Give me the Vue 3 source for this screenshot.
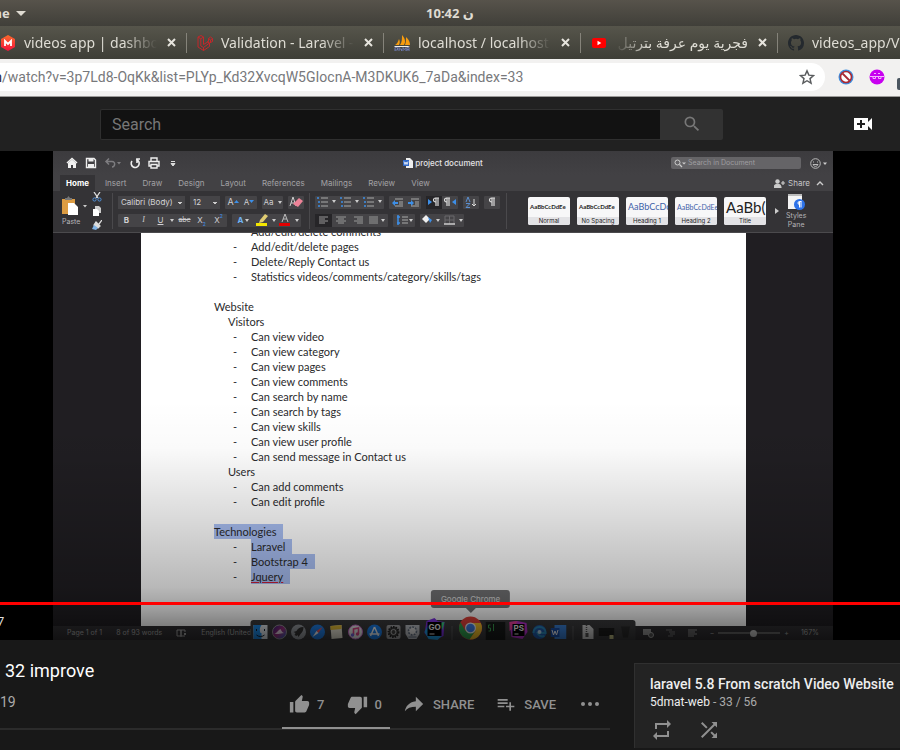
<script setup>
import { ref } from 'vue'

const url = ref('/watch?v=3p7Ld8-OqKk&list=PLYp_Kd32XvcqW5GIocnA-M3DKUK6_7aDa&index=33')
const query = ref('')
const docQuery = ref('')
const zoomLevel = ref(57)

const tabs = [
  { icon: 'm', text: 'videos app | dashboard' },
  { icon: 'laravel', text: 'Validation - Laravel - T' },
  { icon: 'pma', text: 'localhost / localhost /' },
  { icon: 'yt', text: 'فجرية يوم عرفة بترتيل', rtl: true },
  { icon: 'github', text: 'videos_app/Vi' }
]

const ribbonTabs = ['Home', 'Insert', 'Draw', 'Design', 'Layout', 'References', 'Mailings', 'Review', 'View']

const lines = [
  { level: 2, text: 'Add/edit/delete comments' },
  { level: 2, text: 'Add/edit/delete pages' },
  { level: 2, text: 'Delete/Reply Contact us' },
  { level: 2, text: 'Statistics videos/comments/category/skills/tags' },
  { level: 0, text: '' },
  { level: 0, text: 'Website' },
  { level: 1, text: 'Visitors' },
  { level: 2, text: 'Can view video' },
  { level: 2, text: 'Can view category' },
  { level: 2, text: 'Can view pages' },
  { level: 2, text: 'Can view comments' },
  { level: 2, text: 'Can search by name' },
  { level: 2, text: 'Can search by tags' },
  { level: 2, text: 'Can view skills' },
  { level: 2, text: 'Can view user profile' },
  { level: 2, text: 'Can send message in Contact us' },
  { level: 1, text: 'Users' },
  { level: 2, text: 'Can add comments' },
  { level: 2, text: 'Can edit profile' },
  { level: 0, text: '' },
  { level: 0, text: 'Technologies', selected: true },
  { level: 2, text: 'Laravel', selected: true },
  { level: 2, text: 'Bootstrap 4', selected: true },
  { level: 2, text: 'Jquery', selected: true, misspelt: true }
]

const styleCards = [
  { sample: 'AaBbCcDdEe', name: 'Normal', kind: 'body' },
  { sample: 'AaBbCcDdEe', name: 'No Spacing', kind: 'body' },
  { sample: 'AaBbCcDc', name: 'Heading 1', kind: 'h1' },
  { sample: 'AaBbCcDdEe', name: 'Heading 2', kind: 'h2' },
  { sample: 'AaBb(', name: 'Title', kind: 'title' }
]
</script>

<template>
  <div class="screen">
    <header class="system-bar">
      <button class="app-menu"><span class="cut">m</span>e
        <svg width="10" height="5" viewBox="0 0 10 5"><path d="M0 0h10L5 5z" fill="#dfdbd2" /></svg>
      </button>
      <time class="clock">10:42 ن</time>
    </header>

    <nav class="tab-strip">
      <div v-for="tab in tabs" :key="tab.icon" class="tab">
        <svg v-if="tab.icon === 'm'" class="favicon" viewBox="0 0 16 16">
          <defs><linearGradient id="mg" x1="0" y1="0" x2="0" y2="1"><stop offset="0" stop-color="#f96a2b" /><stop offset="1" stop-color="#f5123d" /></linearGradient></defs>
          <path d="M8 0l7 4v8l-7 4-7-4V4z" fill="url(#mg)" />
          <path d="M5 11V6l3 3 3-3v5" fill="none" stroke="#fff" stroke-width="1.800" />
        </svg>
        <svg v-else-if="tab.icon === 'laravel'" class="favicon" viewBox="0 0 16 16" fill="none" stroke="#c3272b" stroke-width="1">
          <path d="M1 2l3-1.500L6.500 2v7.500l5-3V3.500L13.500 2l2 1.500V6.500L12.500 8v3.500L6.500 15.500 1 12zM1 2l2.800 1.800L6.500 2M3.800 3.800V11l2.700 1.500 6-4.500-2.500-1.500M6.500 12.500v3M11.500 3.500l2 1.500 2-1.500M13.500 5v2.500" />
        </svg>
        <svg v-else-if="tab.icon === 'pma'" class="favicon" viewBox="0 0 16 16">
          <path d="M8 0c3 3 4 7 2 10H6C8 7 8 4 8 0zM12 2c3 3 4 5 4 8h-5C12 7 12 5 12 2zM5 4C4 7 3 9 1 10h4c1-2 1-4 0-6z" fill="#f89c0e" />
          <path d="M0 11h16l-2 1H1z" fill="#f5f0e6" />
          <path d="M1 16v-3.500h2.500V15H1M5 16v-4M5 14h2.500v2M9 16v-3.500l1.500 2 1.500-2V16M13 16v-3.500h2V16M13 14.500h2" fill="none" stroke="#6c78af" stroke-width="1" />
        </svg>
        <svg v-else-if="tab.icon === 'yt'" class="favicon" viewBox="0 0 16 16">
          <rect x="1" y="3" width="14" height="10" rx="2" fill="#f00" /><path d="M6.500 5.800v4.400L10.300 8z" fill="#fff" />
        </svg>
        <svg v-else class="favicon" viewBox="0 0 16 16">
          <path d="M8 0C3.580 0 0 3.580 0 8c0 3.540 2.290 6.530 5.470 7.590.4.070.55-.170.55-.380v-1.490c-2.010.37-2.530-.49-2.690-.94-.09-.23-.48-.94-.82-1.130-.28-.15-.68-.52-.01-.53.63-.01 1.080.58 1.230.82.72 1.210 1.870.87 2.330.66.07-.52.28-.87.51-1.070-1.780-.2-3.640-.89-3.640-3.950 0-.87.31-1.590.82-2.150-.08-.2-.36-1.020.08-2.120 0 0 .67-.21 2.200.82a7.600 7.600 0 014 0c1.530-1.040 2.200-.82 2.200-.82.44 1.100.16 1.920.08 2.120.51.56.82 1.270.82 2.150 0 3.070-1.870 3.750-3.650 3.950.29.25.54.73.54 1.480v2.200c0 .21.15.46.55.38A8 8 0 0016 8c0-4.420-3.580-8-8-8z" fill="#24292e" />
        </svg>
        <a href="#" class="tab-text" :class="{ rtl: tab.rtl }">{{ tab.text }}</a>
        <button class="tab-close" aria-label="Close tab">
          <svg width="9" height="9" viewBox="0 0 9 9"><path d="M1 1l7 7M8 1L1 8" stroke="#e6e4dd" stroke-width="2" /></svg>
        </button>
      </div>
    </nav>

    <div class="toolbar">
      <div class="address">
        <span class="cut host">m</span>
        <input v-model="url" class="url" type="text" aria-label="Address" spellcheck="false">
        <button aria-label="Bookmark">
          <svg width="16" height="16" viewBox="0 0 24 24"><path d="M12 2.800l2.800 6.400 7 .6-5.300 4.600 1.600 6.800L12 17.600l-6.100 3.600 1.600-6.800L2.200 9.800l7-.6z" fill="none" stroke="#5a5c5e" stroke-width="2.200" /></svg>
        </button>
      </div>
      <button aria-label="Blocker">
        <svg width="16" height="16" viewBox="0 0 16 16"><circle cx="8" cy="8" r="7.500" fill="#3d8fe0" /><circle cx="8" cy="8" r="5.500" fill="#fff" stroke="#a92a34" stroke-width="1.600" /><path d="M4.500 4.500l7 7" stroke="#a92a34" stroke-width="1.800" /></svg>
      </button>
      <button aria-label="Extension">
        <svg width="16" height="16" viewBox="0 0 16 16"><circle cx="8" cy="8" r="7.500" fill="#c800f0" /><path d="M1 7.500h14M4 7.500v2h2.500v-2M9.500 7.500v2H12v-2M5 4.500h2M9 4.500h2" fill="none" stroke="#f2b5ff" stroke-width="1" /></svg>
      </button>
      <span class="ext-badge"></span>
    </div>

    <div class="masthead">
      <form class="search" @submit.prevent>
        <input v-model="query" type="text" placeholder="Search" aria-label="Search">
        <button aria-label="Submit search">
          <svg width="20" height="20" viewBox="0 0 24 24"><path d="M15.500 14h-.79l-.28-.27A6.470 6.470 0 0016 9.500 6.500 6.500 0 109.500 16c1.610 0 3.090-.59 4.230-1.570l.27.28v.79l5 4.990L20.490 19l-4.990-5zm-6 0C7.010 14 5 11.990 5 9.500S7.010 5 9.500 5 14 7.010 14 9.500 11.990 14 9.500 14z" fill="#777" /></svg>
        </button>
      </form>
      <button aria-label="Create video">
        <svg width="18" height="12" viewBox="0 0 18 12"><path d="M0 0h14v4l4-4v12l-4-4v4H0z" fill="#fff" /><path d="M7 2v8M3 6h8" stroke="#212121" stroke-width="2" /></svg>
      </button>
    </div>

    <section class="player">
      <div class="word">
        <div class="word-title">
          <div class="quick">
            <svg width="12" height="12" viewBox="0 0 12 12"><path d="M1 6l5-4.500L11 6" fill="none" stroke="#f0f0f0" stroke-width="1.600" /><path d="M2 6l4-3.500L10 6v5H7V8H5v3H2z" fill="#f0f0f0" /></svg>
            <svg width="12" height="12" viewBox="0 0 12 12"><path d="M1.500 1.500h7.500l1.500 1.500v7.500h-9z" fill="none" stroke="#eee" stroke-width="1.400" /><path d="M3.500 1.500h5v3h-5zM3 7h6v3.500H3z" fill="#eee" /></svg>
            <svg width="18" height="12" viewBox="0 0 18 12"><path d="M5 1.500L2 4.500l3 3M2.500 4.500H8c4 0 3 5.500 0 5.500" fill="none" stroke="#7e7d80" stroke-width="1.500" /><path d="M13 5h4l-2 2.500z" fill="#7e7d80" /></svg>
            <svg width="12" height="12" viewBox="0 0 12 12"><path d="M7 2.500A4 4 0 113 4M8 6V2h3" fill="none" stroke="#eee" stroke-width="1.600" /></svg>
            <svg width="12" height="12" viewBox="0 0 12 12"><path d="M3 4V1h6v3M3 9H1V4.500h10V9H9M3 7.500h6V11H3z" fill="none" stroke="#eee" stroke-width="1.400" /></svg>
            <svg width="12" height="12" viewBox="0 0 12 12"><path d="M4 4.500h4M4 6.500h4L6 9z" fill="#ddd" stroke="#ddd" /></svg>
          </div>
          <div class="doc-name">
            <svg width="10" height="10" viewBox="0 0 10 10"><path d="M3 0h4l3 3v7H3z" fill="#eee" /><path d="M0 2h6v6H0z" fill="#2f68c8" /><path d="M1 3.500l1 3 1-2.500 1 2.500 1-3" fill="none" stroke="#fff" stroke-width=".8" /></svg>
            <span>project document</span>
          </div>
          <div class="title-right">
            <label class="doc-search">
              <svg width="12" height="9" viewBox="0 0 12 9"><circle cx="3.500" cy="3.500" r="2.500" fill="none" stroke="#ccc" /><path d="M5.500 5.500L8 8" stroke="#ccc" stroke-width="1.300" /><path d="M8 3.500h4l-2 2z" fill="#ccc" /></svg>
              <input v-model="docQuery" type="text" placeholder="Search in Document" aria-label="Search in Document">
            </label>
            <svg width="17" height="11" viewBox="0 0 17 11"><circle cx="5.500" cy="5.500" r="4.800" fill="none" stroke="#bbb" /><path d="M3 6.500c1 2.500 4 2.500 5 0zM3.500 3.500v1M7.500 3.500v1" fill="none" stroke="#bbb" /><path d="M13 4.500h4l-2 2.500z" fill="#ccc" /></svg>
          </div>
        </div>

        <div class="word-tabs">
          <button v-for="name in ribbonTabs" :key="name" :class="{ active: name === 'Home' }">{{ name }}</button>
          <button class="share-doc">
            <svg width="11" height="9" viewBox="0 0 11 9"><circle cx="3.500" cy="2.500" r="2.200" fill="#ccc" /><path d="M0 9c0-5 7-5 7 0zM7 4h4M9 2v4" fill="#ccc" stroke="#ccc" stroke-width="1.200" /></svg>
            Share
            <svg class="fold" width="8" height="6" viewBox="0 0 8 6"><path d="M1 5l3-3 3 3" fill="none" stroke="#ccc" stroke-width="1.400" /></svg>
          </button>
        </div>

        <div class="ribbon">
          <button class="paste">
            <svg width="26" height="20" viewBox="0 0 26 20"><path d="M1 3h13v15H1z" fill="#dc9c43" /><path d="M4 4V2h2l1.500-2L9 2h2v2z" fill="#777" /><path d="M7 7h6l4 4v8H7z" fill="#fff" /><path d="M22 9h4l-2 2.500z" fill="#ccc" /></svg>
            <span>Paste</span>
          </button>
          <div class="clip-tools">
            <button aria-label="Cut"><svg width="10" height="10" viewBox="0 0 10 10"><path d="M2 0l4 6M8 0L4 6" stroke="#ddd" stroke-width="1.300" /><circle cx="2.500" cy="7.500" r="1.600" fill="none" stroke="#4f8fd8" /><circle cx="7.500" cy="7.500" r="1.600" fill="none" stroke="#4f8fd8" /></svg></button>
            <button aria-label="Copy"><svg width="10" height="10" viewBox="0 0 10 10"><path d="M3 0h4l2 2v5H3z" fill="#ccc" /><path d="M1 3h4l2 2v5H1z" fill="#fff" /></svg></button>
            <button aria-label="Format painter"><svg width="10" height="10" viewBox="0 0 10 10"><path d="M10 0L7 4M4 2l4 4-2 2-4-3z" stroke="#ddd" fill="#ddd" stroke-width="1.300" /><path d="M2 5l4 3-2 2-4-1z" fill="#7fb2e5" /></svg></button>
          </div>

          <div class="block font-block">
            <div class="row">
              <select class="font-name" aria-label="Font"><option>Calibri (Body)</option></select>
              <select class="font-size" aria-label="Font size"><option>12</option></select>
              <div class="group">
                <button class="wide grow">A<svg width="5" height="4" viewBox="0 0 5 4"><path d="M0 3l2.500-3L5 3z" fill="#3d8fe8" /></svg></button>
                <button class="wide">A<svg width="5" height="4" viewBox="0 0 5 4"><path d="M0 0h5L2.500 3z" fill="#3d8fe8" /></svg></button>
              </div>
              <div class="group"><button class="case">Aa<svg width="8" height="5" viewBox="0 0 8 5"><path d="M4 1h4L6 4z" fill="#ccc" /></svg></button></div>
              <div class="group"><button aria-label="Clear formatting" class="wide"><svg width="14" height="12" viewBox="0 0 14 12"><path d="M1 10L4 1l3 9M2 7h4" fill="none" stroke="#ccc" /><path d="M10 2l4 3-5 6-5-3z" fill="#ee8398" /></svg></button></div>
            </div>
            <div class="row">
              <div class="group">
                <button class="cell b">B</button><button class="cell i">I</button><button class="cell u">U</button>
                <svg width="7" height="5" viewBox="0 0 7 5"><path d="M1 1h4L3 4z" fill="#ccc" /></svg>
                <button class="cell s">abc</button><button class="cell">X<sub>2</sub></button><button class="cell">X<sup>2</sup></button>
              </div>
              <div class="group">
                <button class="mark fx">A<svg width="6" height="5" viewBox="0 0 6 5"><path d="M2 1h4L4 4z" fill="#ccc" /></svg></button>
                <button class="mark" aria-label="Highlight"><svg width="21" height="12" viewBox="0 0 21 12"><path d="M9 0l3 2-5 6-4 1 1-3z" fill="#e0cc72" /><path d="M0 9h11v3H0z" fill="#f3e600" /><path d="M16 5h4l-2 3z" fill="#ccc" /></svg></button>
                <button class="mark" aria-label="Font colour"><svg width="21" height="12" viewBox="0 0 21 12"><path d="M3 8L6 0l3 8M4 5h4" fill="none" stroke="#bbb" /><path d="M0 9h11v3H0z" fill="#e30000" /><path d="M16 5h4l-2 3z" fill="#ccc" /></svg></button>
              </div>
            </div>
          </div>

          <div class="block para-block">
            <div class="row">
              <div class="group">
                <button v-for="n in 3" :key="n" class="list-button" aria-label="List">
                  <svg width="20" height="10" viewBox="0 0 20 10"><path d="M0 1h2M1 5h2M1 9h2" stroke="#3d8fe8" stroke-width="1.600" /><path d="M4 1h7M4 5h7M4 9h7" stroke="#aaa" /><path d="M15 3h4l-2 3z" fill="#ccc" /></svg>
                </button>
              </div>
              <div class="group">
                <button class="wide" aria-label="Decrease indent"><svg width="11" height="9" viewBox="0 0 11 9"><path d="M0 5l3-3v2h3v2H3v2z" fill="#3d8fe8" /><path d="M3 1h8M7 4h4M7 6h4M3 8h8" stroke="#aaa" /></svg></button>
                <button class="wide" aria-label="Increase indent"><svg width="11" height="9" viewBox="0 0 11 9"><path d="M6 5L3 2v2H0v2h3v2z" fill="#3d8fe8" /><path d="M3 1h8M7 4h4M7 6h4M3 8h8" stroke="#aaa" /></svg></button>
              </div>
              <div class="group">
                <button class="wide pressed" aria-label="Left to right"><svg width="12" height="10" viewBox="0 0 12 10"><path d="M0 2l4 3-4 3z" fill="#3d8fe8" /><path d="M11 1H7.500a2 2 0 000 4M8 1v8M10 1v8" fill="none" stroke="#ddd" stroke-width="1.200" /></svg></button>
                <button class="wide" aria-label="Right to left"><svg width="12" height="10" viewBox="0 0 12 10"><path d="M12 2L8 5l4 3z" fill="#3d8fe8" /><path d="M6 1H2.500a2 2 0 000 4M3 1v8M5 1v8" fill="none" stroke="#ddd" stroke-width="1.200" /></svg></button>
              </div>
              <div class="group"><button class="wide" aria-label="Sort"><svg width="12" height="11" viewBox="0 0 12 11"><path d="M1 5l2-5 2 5M1 6.500h4L1 10.500h4" fill="none" stroke="#5b8fd0" /><path d="M9 2v7M7 7l2 2 2-2" fill="none" stroke="#ddd" /></svg></button></div>
              <div class="group"><button class="wide" aria-label="Show marks"><svg width="8" height="10" viewBox="0 0 8 10"><path d="M7 1H3.500a2 2 0 000 4M4 1v8M6 1v8" fill="none" stroke="#ddd" stroke-width="1.200" /></svg></button></div>
            </div>
            <div class="row">
              <div class="group">
                <button class="cell pressed" aria-label="Align left"><svg width="10" height="8" viewBox="0 0 10 8"><path d="M0 1h9M0 3h6M0 5h9M0 7h6" stroke="#999" /></svg></button>
                <button class="cell" aria-label="Align centre"><svg width="10" height="8" viewBox="0 0 10 8"><path d="M0 1h10M2 3h6M0 5h10M2 7h6" stroke="#999" /></svg></button>
                <button class="cell" aria-label="Align right"><svg width="10" height="8" viewBox="0 0 10 8"><path d="M1 1h9M4 3h6M1 5h9M4 7h6" stroke="#999" /></svg></button>
                <button class="mark" aria-label="Justify"><svg width="18" height="8" viewBox="0 0 18 8"><path d="M1 1h9M1 3h9M1 5h9M1 7h9" stroke="#999" /><path d="M13 3h4l-2 3z" fill="#ccc" /></svg></button>
              </div>
              <div class="group"><button class="mark" aria-label="Line spacing"><svg width="17" height="10" viewBox="0 0 17 10"><path d="M2 0v10M1 2h3M1 8h3" stroke="#3d8fe8" stroke-width="1.500" /><path d="M6 2h6M6 5h6M6 8h6" stroke="#aaa" /><path d="M13 4h4l-2 3z" fill="#ccc" /></svg></button></div>
              <div class="group">
                <button class="mark" aria-label="Shading"><svg width="19" height="10" viewBox="0 0 19 10"><path d="M4 0l4 4-4 4-4-4z" fill="#eee" /><path d="M6 2l4 3-2 3z" fill="#3d8fe8" /><path d="M14 4h4l-2 3z" fill="#ccc" /></svg></button>
                <button class="mark" aria-label="Borders"><svg width="19" height="10" viewBox="0 0 19 10"><path d="M1 1h9v8M1 1v8M5.500 1v8M1 5h9" fill="none" stroke="#6a696c" /><path d="M0 9h11" stroke="#ccc" stroke-width="1.500" /><path d="M15 4h4l-2 3z" fill="#ccc" /></svg></button>
              </div>
            </div>
          </div>

          <div class="gallery">
            <button v-for="card in styleCards" :key="card.name" class="card" :class="card.kind">
              <span class="sample">{{ card.sample }}</span>
              <span class="card-name">{{ card.name }}</span>
            </button>
            <svg width="4" height="6" viewBox="0 0 4 6"><path d="M0 0l4 3-4 3z" fill="#ccc" /></svg>
            <button class="pane">
              <svg width="18" height="18" viewBox="0 0 18 18"><path d="M1 1h14v15H1z" fill="#f4f4f4" /><path d="M1 1h14v2H1z" fill="#bbb" /><circle cx="12.500" cy="11.500" r="5.500" fill="#2d72e8" /><path d="M14.500 8.500h-2a1.500 1.500 0 000 3M12.500 8.500v6M14 8.500v6" fill="none" stroke="#fff" /></svg>
              <span>Styles</span>
              <span>Pane</span>
            </button>
          </div>
        </div>

        <div class="desk">
          <article class="page">
            <p v-for="(line, i) in lines" :key="i" class="line" :class="'level-' + line.level">
              <span v-if="line.level === 2" class="dash">-</span>
              <span :class="{ selected: line.selected }"><span :class="{ misspelt: line.misspelt }">{{ line.text }}</span></span>
            </p>
          </article>
        </div>

        <footer class="status">
          <span>Page 1 of 1</span>
          <span>8 of 93 words</span>
          <svg width="11" height="8" viewBox="0 0 11 8"><path d="M5 1v7M1 1h4v6H1zM5 1h4v2M9 7H5M8 4l2 2M10 4L8 6" fill="none" stroke="#aaa" /></svg>
          <span>English (United</span>
          <div class="status-right">
            <svg width="11" height="10" viewBox="0 0 11 10"><path d="M0 1h8v6H0z" fill="#999" /><circle cx="8" cy="7" r="2.500" fill="#555" stroke="#aaa" /></svg>
            <svg width="10" height="8" viewBox="0 0 10 8"><path d="M0 1h6M3 3h6M4 5h5M2 7h5" stroke="#777" /></svg>
            <svg width="10" height="8" viewBox="0 0 10 8"><path d="M0 1h9M0 3h7M0 5h9M0 7h6" stroke="#999" /></svg>
            <div class="zoom-control">
              <span>−</span>
              <input v-model="zoomLevel" type="range" min="0" max="100" aria-label="Zoom">
              <span>+</span>
            </div>
            <span>167%</span>
          </div>
        </footer>

        <div class="dock">
          <svg width="16" height="16" viewBox="0 0 16 16"><rect x="1" y="1" width="14" height="14" fill="#e8eef4" /><path d="M1 1h8c-2 3-2 6-1 8h1v6H1z" fill="#1e90f0" /><path d="M4 5v2M12 5v2M4 11c2 2 6 2 8 0" fill="none" stroke="#123" /></svg>
          <svg width="16" height="16" viewBox="0 0 16 16"><defs><linearGradient id="siri" x1="0" y1="0" x2="1" y2="1"><stop offset="0" stop-color="#302080" /><stop offset=".5" stop-color="#a03080" /><stop offset="1" stop-color="#2b6fc8" /></linearGradient></defs><circle cx="8" cy="8" r="7" fill="url(#siri)" stroke="#999" /><path d="M3 10c2-1 4-4 6-5 1 2 2 4 4 4-3 0-4 1-6 1z" fill="#fff" opacity=".8" /></svg>
          <svg width="16" height="16" viewBox="0 0 16 16"><circle cx="8" cy="8" r="7.500" fill="#9a9ea4" /><path d="M13 3c-4 0-6 2-7 4L3 8l2 1-1 2 2 1 1-1 1 2 2-3c2-2 3-4 3-7z" fill="#333" /></svg>
          <svg width="16" height="16" viewBox="0 0 16 16"><circle cx="8" cy="8" r="7.500" fill="#2183ee" /><path d="M13 3L9 9 7 7z" fill="#f55" /><path d="M3 13l4-6 2 2z" fill="#fff" /></svg>
          <svg width="16" height="16" viewBox="0 0 16 16"><path d="M2 2l11-1 1 13-11 1z" fill="#f2efe0" /><path d="M2 2l11-1v4L2 6z" fill="#f3c93a" /></svg>
          <svg width="16" height="16" viewBox="0 0 16 16"><circle cx="8" cy="8" r="7" fill="#f6f6f6" stroke="#d776d8" /><path d="M6 11V5l5-1v6" fill="none" stroke="#e4478c" stroke-width="1.600" /><circle cx="5" cy="11" r="1.700" fill="#7a6bea" /><circle cx="10" cy="10" r="1.700" fill="#e4478c" /></svg>
          <svg width="16" height="16" viewBox="0 0 16 16"><circle cx="8" cy="8" r="7.500" fill="#1b83f2" /><path d="M8 3l-4 9M8 3l4 9M3 10h10" stroke="#fff" stroke-width="1.500" /></svg>
          <svg width="16" height="16" viewBox="0 0 16 16"><rect x="1" y="1" width="14" height="14" rx="2" fill="#a6a6a8" /><circle cx="8" cy="8" r="5" fill="#444" stroke="#222" stroke-width="2" stroke-dasharray="1.500 1" /><circle cx="8" cy="8" r="2.500" fill="none" stroke="#bbb" /></svg>
          <svg width="16" height="16" viewBox="0 0 16 16"><path d="M1 1h14v9l-3 5H4l-3-5z" fill="#c4c8ce" /><circle cx="8" cy="7" r="4" fill="#e8e8e8" stroke="#687587" stroke-width="1.600" stroke-dasharray="2 1" /><path d="M4 13h8" stroke="#687587" /></svg>
          <svg width="22" height="22" viewBox="0 0 22 22"><path d="M3 3l8-3 3 3 7 1-1 14-6 3-9-1-4-5z" fill="#8032e8" /><path d="M1 14l3-6 14 10-4 4-9-1z" fill="#21a5ef" /><path d="M16 5l5-1-2 8z" fill="#3ddc84" /><rect x="4" y="4" width="14" height="14" fill="#000" /><path d="M6 16h5" stroke="#fff" /><text x="5" y="12">GO</text></svg>
          <span class="dock-rule"></span>
          <div class="dock-item">
            <span class="tooltip">Google Chrome</span>
            <svg width="24" height="24" viewBox="0 0 24 24"><circle cx="12" cy="12" r="11.500" fill="#e9423a" /><path d="M2 6.300A11.500 11.500 0 0011 23.500l6-8.500-5-3-5 3z" fill="#33a852" /><path d="M22.200 7H12l5 8-6 8.500A11.500 11.500 0 0022.200 7z" fill="#fdc92e" /><circle cx="12" cy="12" r="5.500" fill="#f5f5f5" /><circle cx="12" cy="12" r="4.300" fill="#3f82f1" /></svg>
          </div>
          <svg width="20" height="18" viewBox="0 0 20 18"><rect width="20" height="18" fill="#181b1a" /><path d="M5 3H3v3h2v3H3M8 2v7" fill="none" stroke="#3aa350" /></svg>
          <svg width="20" height="20" viewBox="0 0 20 20"><path d="M1 2l8-1 9 2 1 9-5 7-11-2z" fill="#c033d6" /><path d="M1 2l8-1-3 6-5 4z" fill="#f542a4" /><rect x="4" y="4" width="12" height="12" fill="#000" /><path d="M6 14h4" stroke="#fff" /><text x="5" y="11">PS</text></svg>
          <svg width="16" height="16" viewBox="0 0 16 16"><circle cx="8" cy="8" r="7" fill="#2260b5" /><path d="M2 9c0-8 12-8 12 0H6c1 3 4 4 7 3" fill="none" stroke="#2d93c6" stroke-width="2" /><circle cx="8" cy="8" r="2" fill="#c2e0f5" /></svg>
          <svg width="16" height="16" viewBox="0 0 16 16"><rect x="4" y="1" width="12" height="14" fill="#3c86e0" /><rect y="4" width="9" height="9" fill="#1b52ae" /><path d="M1.500 6l1.500 5 1.500-4L6 11l1.500-5" fill="none" stroke="#fff" /></svg>
          <span class="dock-rule"></span>
          <svg width="16" height="16" viewBox="0 0 16 16"><path d="M3 1h7l4 4v10H3z" fill="#d5d5d5" /><path d="M7 1v10" stroke="#555" stroke-width="1.500" stroke-dasharray="1 1" /><rect x="6" y="9" width="3" height="4" fill="#555" /></svg>
          <svg width="16" height="16" viewBox="0 0 16 16"><rect y="4" width="16" height="8" fill="#1c1c1c" /><rect x="11" y="11" width="4" height="4" fill="#c8c68a" /></svg>
          <svg width="16" height="16" viewBox="0 0 16 16"><path d="M3 2h10l-2 12H5z" fill="#2b2b2c" stroke="#3c3c3d" /></svg>
        </div>
      </div>
      <div class="shade"></div>
      <div class="progress"></div>
      <span class="time">7</span>
    </section>

    <main class="below">
      <div class="primary">
        <h1>32 improve</h1>
        <div class="info">
          <span class="date">19</span>
          <div class="actions">
            <div class="sentiment">
              <button><svg width="21" height="21" viewBox="0 0 24 24"><path d="M1 21h4V9H1v12zm22-11c0-1.100-.9-2-2-2h-6.310l.95-4.570.03-.32c0-.41-.17-.79-.44-1.060L14.170 1 7.590 7.590C7.220 7.950 7 8.450 7 9v10c0 1.100.9 2 2 2h9c.83 0 1.540-.5 1.840-1.220l3.020-7.050c.09-.23.14-.47.14-.73z" fill="#909090" /></svg>7</button>
              <button><svg width="21" height="21" viewBox="0 0 24 24"><path d="M15 3H6c-.83 0-1.540.5-1.840 1.220l-3.020 7.050c-.09.23-.14.47-.14.73v2c0 1.100.9 2 2 2h6.310l-.95 4.570-.03.32c0 .41.17.79.44 1.060L9.830 23l6.590-6.590c.36-.36.58-.86.58-1.410V5c0-1.100-.9-2-2-2zm4 0v12h4V3h-4z" fill="#909090" /></svg>0</button>
            </div>
            <button><svg width="22" height="22" viewBox="0 0 24 24"><path d="M14 9V4l8 8-8 8v-5c-5.500 0-9.500 1.500-12 5 1-5 4-10 12-11z" fill="#909090" /></svg>SHARE</button>
            <button class="save"><svg width="20" height="20" viewBox="0 0 24 24"><path d="M14 10H2v2h12v-2zm0-4H2v2h12V6zm4 8v-4h-2v4h-4v2h4v4h2v-4h4v-2h-4zM2 16h8v-2H2v2z" fill="#909090" /></svg>SAVE</button>
            <button class="more" aria-label="More actions"><svg width="20" height="6" viewBox="0 0 20 6"><g fill="#909090"><circle cx="3" cy="3" r="2" /><circle cx="10" cy="3" r="2" /><circle cx="17" cy="3" r="2" /></g></svg></button>
          </div>
        </div>
      </div>
      <aside class="playlist">
        <h2>laravel 5.8 From scratch Video Website</h2>
        <p><a href="#">5dmat-web</a> - 33 / 56</p>
        <div class="playlist-tools">
          <button aria-label="Loop playlist"><svg width="24" height="24" viewBox="0 0 24 24"><path d="M7 7h10v3l4-4-4-4v3H5v6h2V7zm10 10H7v-3l-4 4 4 4v-3h12v-6h-2v4z" fill="#909090" /></svg></button>
          <button aria-label="Shuffle playlist"><svg width="24" height="24" viewBox="0 0 24 24"><path d="M10.590 9.170L5.410 4 4 5.410l5.170 5.170 1.420-1.410zM14.500 4l2.040 2.040L4 18.590 5.410 20 17.960 7.460 20 9.500V4h-5.500zm.33 9.410l-1.410 1.410 3.130 3.130L14.500 20H20v-5.500l-2.040 2.040-3.130-3.130z" fill="#909090" /></svg></button>
        </div>
      </aside>
    </main>
  </div>
</template>

<style>
html { background: #181818; }
</style>

<style scoped>
.screen, .screen * { box-sizing: border-box; }
.screen { font-family: Roboto, "Liberation Sans", sans-serif; background: #181818; overflow: hidden; }
button, input, select { font: inherit; color: inherit; border: 0; padding: 0; margin: 0; background: none; outline: 0; }
button { display: flex; align-items: center; cursor: pointer; }
svg { display: block; flex: none; }
h1, h2, p { margin: 0; font-weight: 400; }
a { color: inherit; text-decoration: none; }
.cut { display: flex; justify-content: flex-end; width: 2px; overflow: hidden; }

.system-bar { display: grid; grid-template-columns: 1fr auto 1fr; align-items: center; height: 26px; background: linear-gradient(#57534b, #403f39); color: #dfdbd2; font: bold 13px "Noto Sans", "DejaVu Sans", sans-serif; }
.app-menu svg { margin-left: 6px; }
.clock { direction: ltr; }

.tab-strip { display: flex; height: 33px; background: linear-gradient(#56554b, #3e3e37); color: #dfddd5; font: 14px "Noto Sans", "DejaVu Sans", sans-serif; }
.tab { display: flex; align-items: center; flex: none; width: 197px; padding: 0 11px 0 10px; position: relative; }
.tab:first-child { width: 187px; padding-left: 0; }
.tab:not(:last-child)::after { content: ""; position: absolute; right: 0; top: 7px; width: 1px; height: 20px; background: #85837a; }
.favicon { width: 16px; height: 16px; margin-right: 8px; }
.tab-text { flex: 1; min-width: 0; overflow: hidden; white-space: nowrap; line-height: 24px; mask-image: linear-gradient(90deg, #000 75%, transparent); }
.tab-text.rtl { direction: rtl; mask-image: linear-gradient(270deg, #000 75%, transparent); }
.tab-close { margin-left: 10px; }

.toolbar { display: flex; align-items: center; gap: 15px; height: 38px; padding-bottom: 1px; background: #f2f1f0; border-bottom: 1px solid #9b9a98; overflow: hidden; }
.address { display: flex; align-items: center; flex: 1; height: 28px; margin-right: -2px; padding-right: 10px; border-radius: 0 14px 14px 0; background: #fff; font: 14px Roboto, sans-serif; }
.host { color: #1d2340; }
.url { flex: 1; min-width: 0; color: #77787b; }
.ext-badge { width: 3px; height: 12px; margin: 14px 0 0 -3px; background: #4b5660; border-radius: 2px 0 0 2px; }

.masthead { display: flex; align-items: center; justify-content: space-between; height: 54px; padding: 0 28px 0 100px; background: #212121; }
.search { display: flex; flex: 0 0 623px; height: 31px; font-size: 16px; color: #eee; }
.search input { flex: 1; padding: 0 11px; background: #121212; border: 1px solid #2f2f2f; border-right: 0; border-radius: 2px 0 0 2px; }
.search input::placeholder { color: #777; opacity: 1; }
.search button { width: 63px; justify-content: center; background: #323232; border-radius: 0 2px 2px 0; }

.player { position: relative; padding: 0 67px 0 53px; background: #000; }
.word { position: relative; overflow: hidden; background: #201e22; color: #b4b3b6; font: 8px/10px Inter, sans-serif; }
.word-title { display: grid; grid-template-columns: 1fr auto 1fr; align-items: center; height: 24px; background: linear-gradient(#3c3b3e, #424144); }
.quick { display: flex; gap: 7px; padding-left: 13px; }
.doc-name { display: flex; align-items: center; gap: 2px; color: #e4e3e6; font-weight: 500; }
.title-right { display: flex; align-items: center; justify-content: flex-end; gap: 9px; padding-right: 6px; }
.doc-search { display: flex; align-items: center; gap: 2px; width: 130px; height: 12px; padding-left: 3px; background: #656467; border-radius: 2px; }
.doc-search input { width: 100px; font-size: 7px; }
.doc-search input::placeholder { color: #9e9da0; opacity: 1; }
.word-tabs { display: flex; gap: 4px; height: 16px; padding: 0 7px; background: #424144; }
.word-tabs button { padding: 0 6px; color: #a2a1a4; }
.word-tabs .active { background: #343336; color: #fff; font-weight: 700; }
.word-tabs .share-doc { margin-left: auto; padding: 0 2px; gap: 3px; color: #c6c5c8; }
.fold { margin-left: 3px; }

.ribbon { display: flex; align-items: center; height: 42px; padding: 0 0 2px 8px; background: #343336; border-bottom: 1px solid #4b4a4d; white-space: nowrap; }
.paste { flex-direction: column; align-items: flex-start; gap: 2px; width: 31px; font-size: 7px; line-height: 8px; }
.paste span { padding-left: 1px; }
.clip-tools { display: flex; flex-direction: column; gap: 4px; width: 20px; }
.block { display: flex; flex-direction: column; gap: 5px; height: 36px; padding: 3px 5px 0; border-left: 1px solid #4a494c; }
.font-block { width: 197px; }
.para-block { width: 198px; border-right: 1px solid #4a494c; }
.row { display: flex; gap: 5px; }
.row select { height: 13px; padding: 0 3px; background: #454447; color: #d5d4d7; appearance: none; font-size: 8px; line-height: 13px; background-image: linear-gradient(#ccc, #ccc), linear-gradient(#ccc, #ccc); background-size: 4px 1px, 2px 2px; background-repeat: no-repeat; background-position: right 3px top 6px, right 4px top 6px; }
.row .font-name { width: 67px; }
.row .font-size { width: 30px; }
.group { display: flex; align-items: center; height: 13px; background: #454447; border-radius: 1px; color: #d0cfd2; }
.group button { justify-content: center; height: 13px; }
.wide { width: 16px; }
.grow { font-size: 9px; }
.case { width: 21px; }
.cell { width: 17px; }
.b { font-weight: 700; }
.i { font-family: "Liberation Serif", serif; font-style: italic; }
.u { text-decoration: underline; }
.s { text-decoration: line-through; font-size: 7px; }
.mark { width: 23px; }
.para-block .mark { width: 22px; }
.fx { color: #6fb4f5; font-weight: 700; }
.list-button { width: 23px; }
.pressed { background: #262528; }
sub, sup { color: #3d8fe8; font-size: 5px; line-height: 5px; }
sub { align-self: flex-end; }
sup { align-self: flex-start; }

.gallery { display: flex; align-items: center; gap: 7px; padding-left: 21px; }
.card { flex-direction: column; justify-content: space-between; width: 42px; height: 28px; overflow: hidden; background: #f7f7f8; border-radius: 2px; color: #222; font-family: Lato, sans-serif; }
.sample { width: 100%; height: 20px; padding-left: 2px; line-height: 20px; font-size: 6px; font-weight: 700; text-align: left; }
.h1 .sample { font-size: 9px; font-weight: 400; color: #3e62a8; }
.h2 .sample { font-size: 7px; font-weight: 400; color: #3e62a8; }
.title .sample { font-size: 15px; font-weight: 400; }
.card-name { width: 100%; height: 8px; line-height: 8px; font-family: Inter, sans-serif; font-size: 6px; background: #e3e3e6; text-align: center; }
.gallery > svg { margin-left: 2px; }
.pane { flex-direction: column; font-size: 7px; line-height: 9px; }

.desk { padding: 0 87px 0 88px; }
.page { padding: 0 73px 42px; background: #fff; color: #2a2a2c; font: 11px/15px Lato, sans-serif; overflow: hidden; }
.line { display: flex; height: 15px; white-space: nowrap; }
.line:first-child { margin-top: -9px; }
.level-1 { padding-left: 14px; }
.level-2 { padding-left: 19px; }
.dash { width: 18px; }
.selected { padding-right: 7px; background: #a9bff3; }
.misspelt { text-decoration: underline #d3203a; }

.status { display: flex; align-items: center; gap: 14px; height: 14px; padding: 0 14px; background: #323134; color: #aaa; font-size: 7px; }
.status-right { display: flex; align-items: center; gap: 12px; margin-left: auto; }
.zoom-control { display: flex; align-items: center; gap: 4px; }
.zoom-control input { appearance: none; width: 62px; height: 2px; background: #666; }
.zoom-control input::-webkit-slider-thumb { appearance: none; width: 7px; height: 7px; border-radius: 50%; background: #ccc; }

.dock { position: absolute; left: 50%; bottom: 0; transform: translateX(-50%); display: flex; align-items: flex-end; gap: 3px; height: 20px; padding: 0 2px; background: #3c3c3e; border-radius: 3px 3px 0 0; }
.dock text { font: bold 8px Inter, sans-serif; fill: #fff; }
.dock-rule { width: 1px; height: 14px; margin: 0 3px; background: #5a5a5c; }
.dock-item { position: relative; }
.tooltip { position: absolute; left: 50%; bottom: 32px; transform: translateX(-50%); padding: 4px 10px; background: #757577; color: #e0e0e0; border-radius: 3px; white-space: nowrap; }
.tooltip::after { content: ""; position: absolute; left: 50%; top: 100%; margin-left: -5px; border: 5px solid transparent; border-top-color: #757577; border-bottom: 0; }

.shade { position: absolute; left: 0; right: 0; bottom: 0; height: 240px; pointer-events: none; background: linear-gradient(transparent, rgba(0,0,0,.02) 20%, rgba(0,0,0,.15) 50%, rgba(0,0,0,.28) 78%, rgba(0,0,0,.38) 87%, rgba(0,0,0,.5) 94%, rgba(0,0,0,.65)); }
.progress { position: absolute; left: 0; right: 0; bottom: 35px; height: 3px; background: #f00; }
.time { position: absolute; left: -3px; bottom: 10px; color: #ddd; font-size: 13px; line-height: 16px; }

.below { display: grid; grid-template-columns: 1fr 266px; gap: 24px; }
.primary { padding-top: 19px; }
h1 { padding-left: 5px; color: #fff; font-size: 18px; line-height: 24px; }
.info { display: flex; justify-content: space-between; height: 47px; border-bottom: 2px solid #2b2b2b; color: #aaa; }
.date { padding-top: 9px; font-size: 14px; line-height: 20px; }
.actions { display: flex; color: #909090; font-size: 13px; font-weight: 500; }
.actions button { gap: 8px; height: 42px; }
.sentiment { display: flex; justify-content: space-between; width: 108px; height: 46px; margin-right: 13px; padding: 0 8px 0 7px; border-bottom: 2px solid #909090; }
.actions .sentiment button { gap: 7px; }
.actions .save { margin-left: 22px; }
.actions .more { margin: 0 10px 0 24px; }

.playlist { margin-top: 23px; padding: 10px 0 6px 15px; background: #232323; border: 1px solid #303030; border-right: 0; border-bottom: 0; color: #aaa; white-space: nowrap; }
.playlist h2 { color: #eee; font-size: 14px; font-weight: 500; line-height: 20px; }
.playlist p { font-size: 12px; line-height: 16px; }
.playlist p a { color: #eee; }
.playlist-tools { display: flex; gap: 23px; padding-top: 8px; }
</style>
